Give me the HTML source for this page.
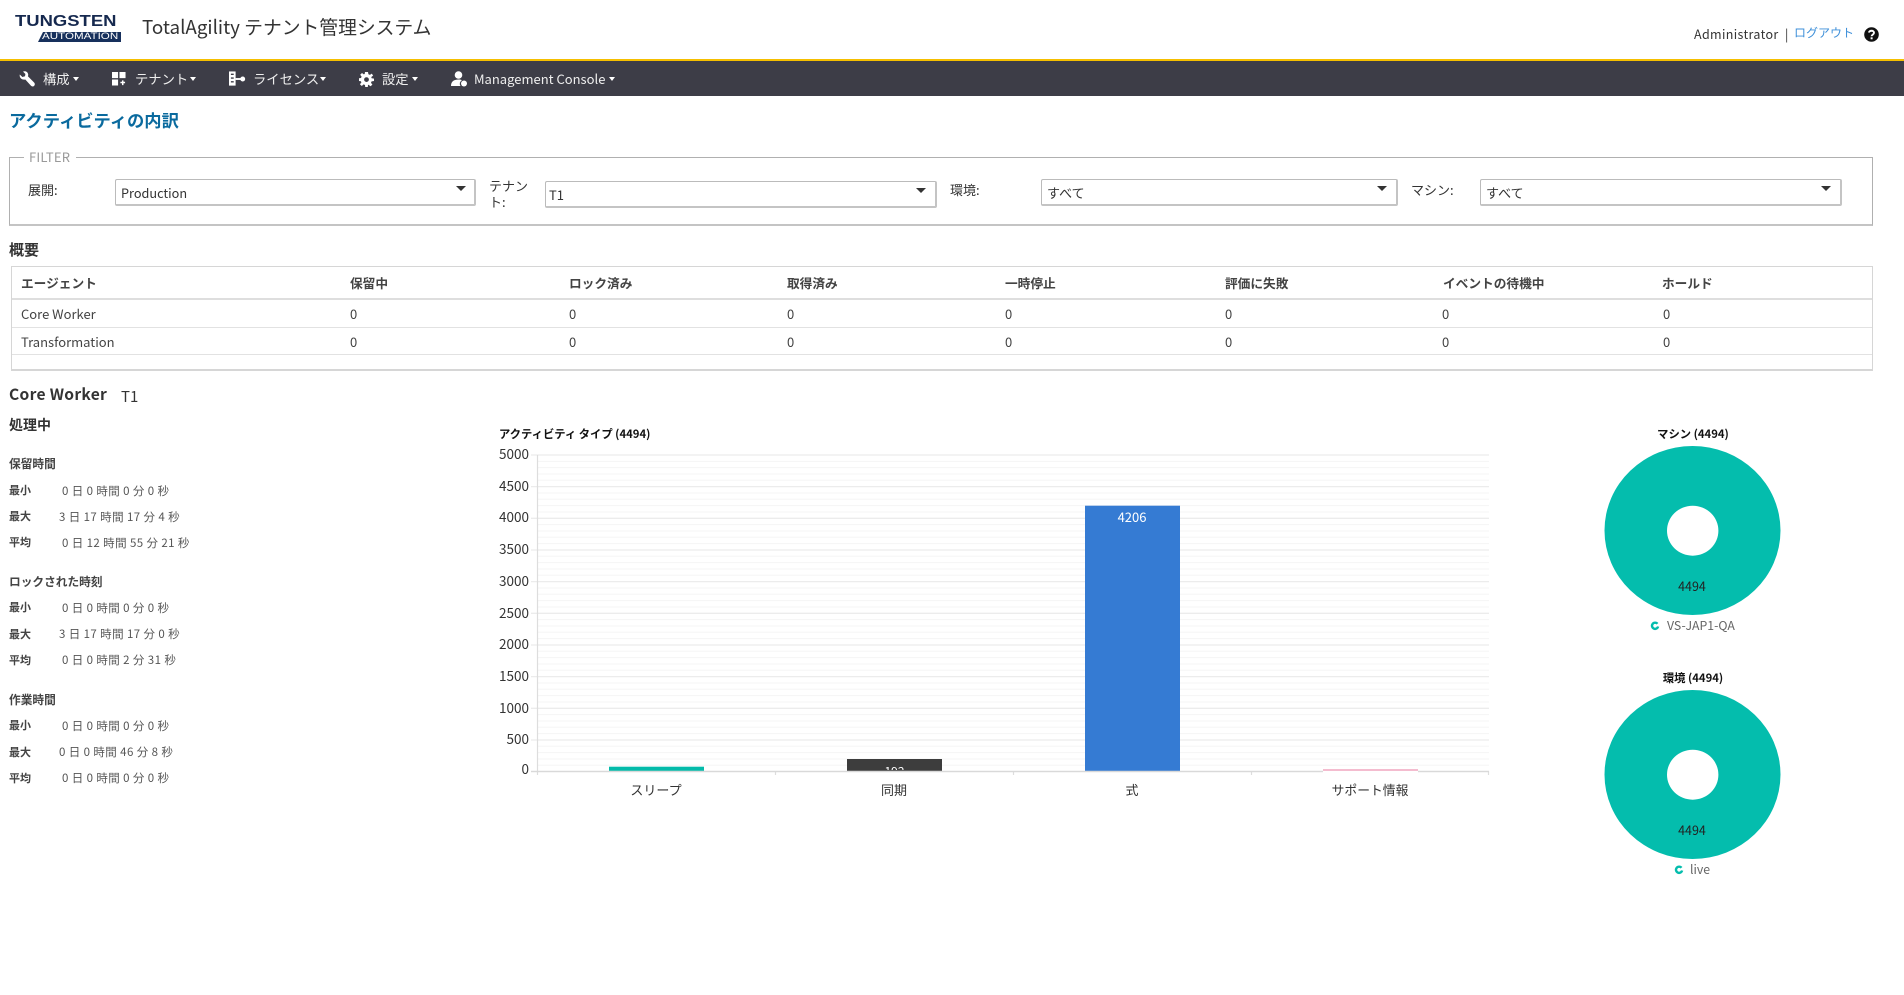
<!DOCTYPE html>
<html lang="ja"><head><meta charset="utf-8"><title>TotalAgility</title>
<style>
html,body{margin:0;padding:0;background:#fff}
#p{position:relative;width:1904px;height:995px;overflow:hidden;background:#fff;font-family:"Noto Sans CJK JP","Liberation Sans",sans-serif;color:#333;filter:blur(.35px)}
.t{position:absolute;white-space:nowrap;line-height:20px;height:20px}
.b{font-weight:700}
.box{position:absolute;box-sizing:border-box}
.sel{position:absolute;box-sizing:border-box;border:1px solid #bbb;border-bottom:2px solid #c4c4c4;border-right:2px solid #c4c4c4;border-radius:2px;background:#fff}
.arr{position:absolute;width:0;height:0;border-left:5px solid transparent;border-right:5px solid transparent;border-top:5px solid #333}
.car{position:absolute;top:77px;width:0;height:0;border-left:3.5px solid transparent;border-right:3.5px solid transparent;border-top:4px solid #fff}
.n{color:#eee;font-size:13.3px;top:69px}
.l{font-size:13px}
.k{font-size:11px;font-weight:700;color:#444}
.v{font-size:11.5px;color:#555;letter-spacing:.4px}
.y{font-size:13.5px;color:#333;width:50px;text-align:right;left:479px}
.x{font-size:13px;color:#333;width:160px;text-align:center}
.c{font-size:13px;color:#444}
.h{font-size:12.7px;font-weight:700;color:#444}
</style></head><body><div id="p">

<!-- logo -->
<div class="t b" style="left:15px;top:12px;font-family:'Liberation Sans',sans-serif;font-size:15.5px;color:#16294f;transform-origin:0 50%;transform:scaleX(1.19)">TUNGSTEN</div>
<svg class="box" style="left:38px;top:32px" width="83" height="10"><path d="M5 0H83V10H0Z" fill="#17305c"/></svg>
<div class="t" style="left:42px;top:27px;font-family:'Liberation Sans',sans-serif;font-size:9.5px;color:#fff;transform-origin:0 50%;transform:scaleX(1.22)">AUTOMATION</div>
<div class="t" style="left:142px;top:16px;font-size:18.8px;color:#333;line-height:22px;height:22px">TotalAgility テナント管理システム</div>
<div class="t" style="left:1694px;top:24px;font-size:12.5px;color:#333;letter-spacing:.35px">Administrator</div>
<div class="t" style="left:1785px;top:24px;font-size:12.5px;color:#333">|</div>
<div class="t" style="left:1794px;top:23px;font-size:12px;color:#3d8fd9">ログアウト</div>
<svg class="box" style="left:1864px;top:27px" width="15" height="15" viewBox="0 0 15 15"><circle cx="7.5" cy="7.5" r="7.3" fill="#111"/><path d="M5 5.6C5.2 3.2 10 3 10 5.8 10 7.6 7.6 7.6 7.6 9.3" fill="none" stroke="#fff" stroke-width="1.9"/><rect x="6.6" y="10.3" width="2" height="2" fill="#fff"/></svg>

<!-- nav -->
<div class="box" style="left:0;top:59px;width:1904px;height:2px;background:#f5bf00"></div>
<div class="box" style="left:0;top:61px;width:1904px;height:35px;background:#3d3d47"></div>
<svg class="box" style="left:19px;top:71px" width="16" height="16" viewBox="0 0 16 16"><path d="M.8 3.500 3.400 6 6 5.300 6.400 3 4 .6C6.300 -.5 9 1 9.200 3.500 9.300 4.300 9.100 4.800 8.900 5.300L15.200 11.600C16.200 12.800 15.800 14.200 15.100 14.900 14.200 15.800 12.800 15.600 12 14.800L6.300 8.500C3.300 9.300 0 7 .8 3.500Z" fill="#fff"/></svg>
<div class="t n" style="left:43px">構成</div><div class="car" style="left:73px"></div>
<svg class="box" style="left:112px;top:72px" width="14" height="14" viewBox="0 0 15 15"><path d="M0 0H6.5V6.5H0ZM8 0H14.5V6.5H8ZM0 8H6.5V14.5H0Z" fill="#fff"/><path d="M9 11.3H14M11.5 9V14" stroke="#fff" stroke-width="1.6"/></svg>
<div class="t n" style="left:135px">テナント</div><div class="car" style="left:190px"></div>
<svg class="box" style="left:229px;top:71px" width="17" height="16" viewBox="0 0 18 16"><path d="M0 0H7V15H0Z" fill="#fff"/><path d="M2 3H5M2 7H5M2 11H5" stroke="#3d3d47" stroke-width="1.5"/><path d="M7 8H14" stroke="#fff" stroke-width="2"/><circle cx="14.5" cy="8" r="2.6" fill="#fff"/></svg>
<div class="t n" style="left:253px">ライセンス</div><div class="car" style="left:320px"></div>
<svg class="box" style="left:359px;top:72px" width="15" height="15" viewBox="0 0 15 15"><path fill-rule="evenodd" d="M6 0H9L9.4 2.2 10.9 2.9 12.8 1.6 14.1 3.6 12.3 5 12.6 6.3 15 6.6V9L12.6 9.4 12 10.8 13.4 12.8 11.4 14.3 9.6 12.7 9 13 8.8 15H6.2L6 13 4.6 12.4 2.8 14 .9 12.2 2.4 10.5 1.9 9.2 0 9V6.3L2 6 2.6 4.6 1.2 2.8 3 1 4.8 2.4 5.7 2ZM7.5 5.2A2.4 2.4 0 1 0 7.5 10 2.4 2.4 0 1 0 7.5 5.2Z" fill="#fff"/></svg>
<div class="t n" style="left:382px">設定</div><div class="car" style="left:412px"></div>
<svg class="box" style="left:451px;top:71px" width="16" height="16" viewBox="0 0 16 16"><circle cx="7.5" cy="4" r="3.800" fill="#fff"/><path d="M0 15C0 10 3.500 8.500 7.500 8.500 9 8.500 10 8.700 11 9.100A4 4 0 0 0 9.500 15Z" fill="#fff"/><circle cx="13" cy="12.500" r="3" fill="#fff"/></svg>
<div class="t n" style="left:474px;font-size:13px">Management Console</div><div class="car" style="left:609px"></div>

<div class="t b" style="left:9px;top:110px;font-size:17.3px;color:#0a6a9e">アクティビティの内訳</div>

<!-- filter -->
<div class="box" style="left:9px;top:157px;width:1864px;height:69px;border:1px solid #b0b0b0;border-bottom:2px solid #c4c4c4"></div>
<div class="box" style="left:24px;top:150px;width:52px;height:14px;background:#fff"></div>
<div class="t" style="left:29px;top:147px;font-size:13px;color:#999;letter-spacing:.2px">FILTER</div>
<div class="t l" style="left:28px;top:180px">展開:</div>
<div class="sel" style="left:115px;top:179px;width:361px;height:27px"></div>
<div class="t l" style="left:121px;top:183px;font-size:12.7px">Production</div><div class="arr" style="left:456px;top:186px"></div>
<div class="t l" style="left:489px;top:176px">テナン</div><div class="t l" style="left:489px;top:192px">ト:</div>
<div class="sel" style="left:545px;top:181px;width:392px;height:27px"></div>
<div class="t l" style="left:549px;top:185px">T1</div><div class="arr" style="left:916px;top:188px"></div>
<div class="t l" style="left:950px;top:180px">環境:</div>
<div class="sel" style="left:1041px;top:179px;width:357px;height:27px"></div>
<div class="t l" style="left:1047px;top:183px">すべて</div><div class="arr" style="left:1377px;top:186px"></div>
<div class="t l" style="left:1411px;top:180px">マシン:</div>
<div class="sel" style="left:1480px;top:179px;width:362px;height:27px"></div>
<div class="t l" style="left:1486px;top:183px">すべて</div><div class="arr" style="left:1821px;top:186px"></div>

<!-- summary -->
<div class="t b" style="left:9px;top:240px;font-size:15px;color:#333">概要</div>
<div class="box" style="left:11px;top:266px;width:1862px;height:105px;border:1px solid #d6d6d6;border-bottom:2px solid #d6d6d6"></div>
<div class="box" style="left:12px;top:298px;width:1860px;height:2px;background:#dedede"></div>
<div class="box" style="left:12px;top:327px;width:1860px;height:1px;background:#e2e2e2"></div>
<div class="box" style="left:12px;top:354px;width:1860px;height:1px;background:#e2e2e2"></div>
<div class="t h" style="left:21px;top:273px">エージェント</div>
<div class="t h" style="left:350px;top:273px">保留中</div>
<div class="t h" style="left:569px;top:273px">ロック済み</div>
<div class="t h" style="left:787px;top:273px">取得済み</div>
<div class="t h" style="left:1005px;top:273px">一時停止</div>
<div class="t h" style="left:1225px;top:273px">評価に失敗</div>
<div class="t h" style="left:1443px;top:273px">イベントの待機中</div>
<div class="t h" style="left:1662px;top:273px">ホールド</div>
<div class="t c" style="left:21px;top:304px">Core Worker</div>
<div class="t c" style="left:21px;top:332px">Transformation</div>
<div class="t c" style="left:350px;top:304px">0</div><div class="t c" style="left:569px;top:304px">0</div><div class="t c" style="left:787px;top:304px">0</div><div class="t c" style="left:1005px;top:304px">0</div><div class="t c" style="left:1225px;top:304px">0</div><div class="t c" style="left:1442px;top:304px">0</div><div class="t c" style="left:1663px;top:304px">0</div>
<div class="t c" style="left:350px;top:332px">0</div><div class="t c" style="left:569px;top:332px">0</div><div class="t c" style="left:787px;top:332px">0</div><div class="t c" style="left:1005px;top:332px">0</div><div class="t c" style="left:1225px;top:332px">0</div><div class="t c" style="left:1442px;top:332px">0</div><div class="t c" style="left:1663px;top:332px">0</div>

<div class="t b" style="left:9px;top:384px;font-size:15.6px;color:#333;letter-spacing:.3px">Core Worker</div>
<div class="t" style="left:121px;top:387px;font-size:15px;color:#333">T1</div>
<div class="t b" style="left:9px;top:415px;font-size:14px;color:#333">処理中</div>

<!-- stats -->
<div class="t k" style="left:9px;top:454px;font-size:11.7px">保留時間</div>
<div class="t k" style="left:9px;top:480px">最小</div><div class="t v" style="left:62px;top:481px">0 日 0 時間 0 分 0 秒</div>
<div class="t k" style="left:9px;top:506px">最大</div><div class="t v" style="left:59px;top:507px">3 日 17 時間 17 分 4 秒</div>
<div class="t k" style="left:9px;top:532px">平均</div><div class="t v" style="left:62px;top:533px">0 日 12 時間 55 分 21 秒</div>
<div class="t k" style="left:9px;top:572px;font-size:11.7px">ロックされた時刻</div>
<div class="t k" style="left:9px;top:597px">最小</div><div class="t v" style="left:62px;top:598px">0 日 0 時間 0 分 0 秒</div>
<div class="t k" style="left:9px;top:624px">最大</div><div class="t v" style="left:59px;top:624px">3 日 17 時間 17 分 0 秒</div>
<div class="t k" style="left:9px;top:650px">平均</div><div class="t v" style="left:62px;top:650px">0 日 0 時間 2 分 31 秒</div>
<div class="t k" style="left:9px;top:690px;font-size:11.7px">作業時間</div>
<div class="t k" style="left:9px;top:715px">最小</div><div class="t v" style="left:62px;top:716px">0 日 0 時間 0 分 0 秒</div>
<div class="t k" style="left:9px;top:742px">最大</div><div class="t v" style="left:59px;top:742px">0 日 0 時間 46 分 8 秒</div>
<div class="t k" style="left:9px;top:768px">平均</div><div class="t v" style="left:62px;top:768px">0 日 0 時間 0 分 0 秒</div>

<!-- bar chart -->
<div class="t b" style="left:499px;top:424px;font-size:11.3px;color:#111">アクティビティ タイプ (4494)</div>
<svg class="box" style="left:525px;top:450px" width="970" height="330" viewBox="525 450 970 330">
<path d="M537 461.330H1489M537 467.660H1489M537 474H1489M537 480.300H1489M537 493H1489M537 499.300H1489M537 505.600H1489M537 512H1489M537 524.600H1489M537 531H1489M537 537.300H1489M537 543.600H1489M537 556.300H1489M537 562.600H1489M537 569H1489M537 575.300H1489M537 588H1489M537 594.300H1489M537 600.600H1489M537 607H1489M537 619.600H1489M537 626H1489M537 632.300H1489M537 638.600H1489M537 651.300H1489M537 657.600H1489M537 664H1489M537 670.300H1489M537 683H1489M537 689.300H1489M537 695.600H1489M537 702H1489M537 714.600H1489M537 721H1489M537 727.300H1489M537 733.600H1489M537 746.300H1489M537 752.600H1489M537 759H1489M537 765.300H1489" stroke="#f5f5f5" stroke-width="1"/>
<path d="M531 455H1489M531 486.600H1489M531 518.300H1489M531 550H1489M531 581.600H1489M531 613.300H1489M531 645H1489M531 676.600H1489M531 708.300H1489M531 740H1489" stroke="#ececec" stroke-width="1.300"/>
<path d="M537.500 455V775M775.500 771V775M1013.500 771V775M1251.500 771V775M1488.500 771V775" stroke="#ddd" stroke-width="1.200"/>
<rect x="609" y="766.700" width="95" height="4.300" fill="#04bbaa"/>
<rect x="847" y="759" width="95" height="12" fill="#3d3d3d"/>
<rect x="1085" y="505.700" width="95" height="265.300" fill="#357bd3"/>
<rect x="1323" y="769" width="95" height="2" fill="#f4bccf"/>
<path d="M531 771.500H1323M1418 771.500H1489" stroke="#d9d9d9" stroke-width="1.500"/>
</svg>
<div class="box" style="left:847px;top:759px;width:95px;height:11px;overflow:hidden"><div class="t" style="left:0;width:95px;top:3px;text-align:center;font-size:12px;color:#fff">192</div></div>
<div class="t y" style="top:443px">5000</div><div class="t y" style="top:475px">4500</div><div class="t y" style="top:506px">4000</div><div class="t y" style="top:538px">3500</div><div class="t y" style="top:570px">3000</div><div class="t y" style="top:602px">2500</div><div class="t y" style="top:633px">2000</div><div class="t y" style="top:665px">1500</div><div class="t y" style="top:697px">1000</div><div class="t y" style="top:728px">500</div><div class="t y" style="top:758px">0</div>
<div class="t x" style="left:576px;top:780px">スリープ</div><div class="t x" style="left:814px;top:780px">同期</div><div class="t x" style="left:1052px;top:780px">式</div><div class="t x" style="left:1290px;top:780px;font-size:12.8px">サポート情報</div>
<div class="t" style="left:1052px;width:160px;text-align:center;top:507px;font-size:13px;color:#fff">4206</div>

<!-- donuts -->
<svg class="box" style="left:1600px;top:440px" width="190" height="440" viewBox="1600 440 190 440">
<path fill-rule="evenodd" fill="#04bdad" d="M1604.500 530.500A88 84.500 0 1 0 1780.500 530.500 88 84.500 0 1 0 1604.500 530.500ZM1667 530.700A25.700 25 0 1 1 1718.400 530.700 25.700 25 0 1 1 1667 530.700Z"/>
<path fill-rule="evenodd" fill="#04bdad" d="M1604.500 774.500A88 84.500 0 1 0 1780.500 774.500 88 84.500 0 1 0 1604.500 774.500ZM1667 774.700A25.700 25 0 1 1 1718.400 774.700 25.700 25 0 1 1 1667 774.700Z"/>
</svg>
<div class="t b" style="left:1593px;width:200px;text-align:center;top:424px;font-size:11.3px;color:#111">マシン (4494)</div>
<div class="t" style="left:1592px;width:200px;text-align:center;top:576px;font-size:12.500px;color:#222">4494</div>
<svg class="box" style="left:1650px;top:621px" width="10" height="10" viewBox="0 0 10 10"><path d="M7.500 2.800A3.100 3.100 0 1 0 8.100 5.500" fill="none" stroke="#04bdad" stroke-width="2.400"/></svg>
<div class="t" style="left:1667px;top:615px;font-size:12.300px;color:#666">VS-JAP1-QA</div>
<div class="t b" style="left:1593px;width:200px;text-align:center;top:668px;font-size:11.3px;color:#111">環境 (4494)</div>
<div class="t" style="left:1592px;width:200px;text-align:center;top:820px;font-size:12.500px;color:#222">4494</div>
<svg class="box" style="left:1674px;top:865px" width="10" height="10" viewBox="0 0 10 10"><path d="M7.500 2.800A3.100 3.100 0 1 0 8.100 5.500" fill="none" stroke="#04bdad" stroke-width="2.400"/></svg>
<div class="t" style="left:1690px;top:859px;font-size:12.300px;color:#666">live</div>
</div></body></html>
